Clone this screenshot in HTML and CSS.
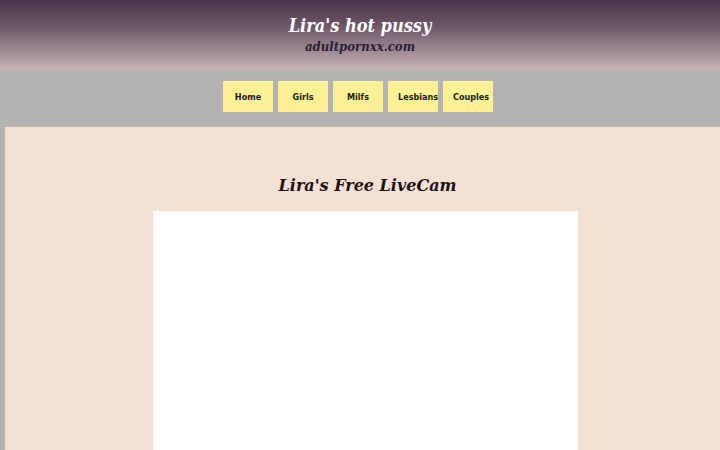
FILE: index.html
```html
<!DOCTYPE html>
<html>
<head>
<meta charset="utf-8">
<title>Lira's hot pussy</title>
<link rel="stylesheet" href="styles.css">
</head>
<body>
<header class="header">
  <h1 class="site-title">Lira's hot pussy</h1>
  <div class="site-sub">adultpornxx.com</div>
</header>
<nav class="nav">
  <a class="nav-btn" href="#">Home</a>
  <a class="nav-btn" href="#">Girls</a>
  <a class="nav-btn" href="#">Milfs</a>
  <a class="nav-btn" href="#">Lesbians</a>
  <a class="nav-btn" href="#">Couples</a>
</nav>
<main class="content">
  <h2 class="cam-title">Lira's Free LiveCam</h2>
  <div class="cam-box"></div>
</main>
</body>
</html>
```
FILE: styles.css
```css
html, body {
  margin: 0;
  padding: 0;
}
body {
  background: #b3b3b3;
  overflow-x: hidden;
  font-family: "DejaVu Sans", sans-serif;
}
.header {
  height: 70px;
  box-sizing: border-box;
  padding-top: 15px;
  text-align: center;
  background: linear-gradient(to bottom, #4a3348 0%, #6a5465 35%, #9b8690 70%, #c8b3b5 100%);
}
.site-title {
  margin: 0;
  font-family: "DejaVu Serif Condensed", "DejaVu Serif", serif;
  font-stretch: condensed;
  font-style: italic;
  font-weight: bold;
  font-size: 18px;
  line-height: 22px;
  color: #ffffff;
}
.site-sub {
  padding-top: 1px;
  font-family: "DejaVu Serif Condensed", "DejaVu Serif", serif;
  font-stretch: condensed;
  font-style: italic;
  font-weight: bold;
  font-size: 13px;
  line-height: 18px;
  color: #2a2035;
}
.nav {
  height: 57px;
  box-sizing: border-box;
  padding-top: 11px;
  padding-right: 4px;
  display: flex;
  justify-content: center;
  gap: 5px;
  background: #b3b3b3;
}
.nav-btn {
  display: block;
  width: 30px;
  height: 31px;
  box-sizing: content-box;
  padding: 0 10px;
  line-height: 33px;
  background: #fef095;
  color: #1c1c1c;
  font-family: "DejaVu Sans Condensed", "DejaVu Sans", sans-serif;
  font-stretch: condensed;
  font-weight: bold;
  font-size: 9px;
  text-align: center;
  white-space: nowrap;
  text-decoration: none;
  overflow: visible;
}
.content {
  margin-left: 5px;
  width: 100%;
  min-height: 330px;
  padding-top: 48px;
  background: #f3e1d4;
}
.cam-title {
  margin: 0 0 14px;
  padding-left: 5px;
  text-align: center;
  font-family: "DejaVu Serif", serif;
  font-style: italic;
  font-weight: bold;
  font-size: 16px;
  line-height: 22px;
  color: #1e1018;
}
.cam-box {
  width: 425px;
  height: 400px;
  margin: 0 auto;
  background: #ffffff;
}
```
